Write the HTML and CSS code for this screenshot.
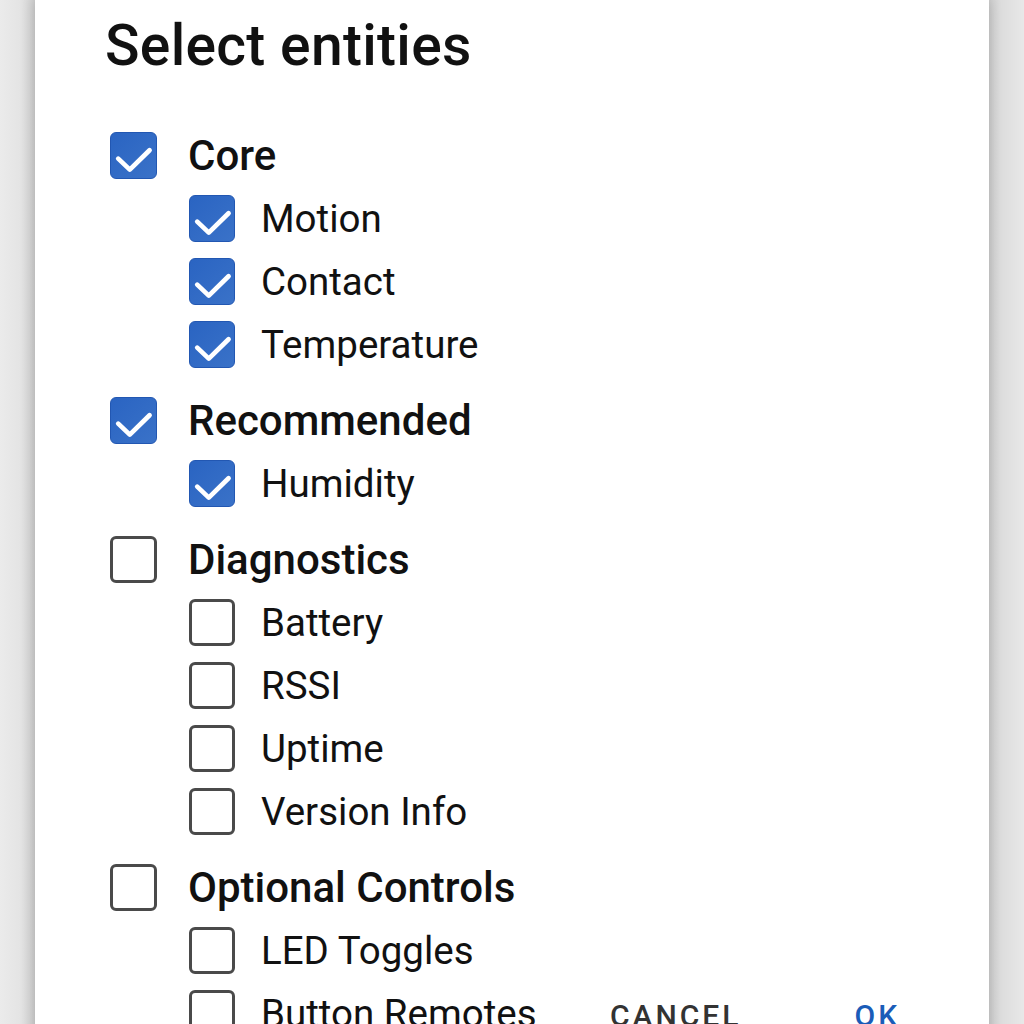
FILE: index.html
```html
<!DOCTYPE html>
<html>
<head>
<meta charset="utf-8">
<link rel="stylesheet" href="styles.css">
</head>
<body>
<div class="card">
  <h1 class="title">Select entities</h1>
  <div class="list">
    <div class="group">
      <div class="row top"><span class="cb on"><svg viewBox="0 0 24 24"><path d="M4.2 13.6 L10.1 19.2 L20.2 9.3"/></svg></span><span class="glabel">Core</span></div>
      <div class="row sub"><span class="cb on"><svg viewBox="0 0 24 24"><path d="M4.2 13.6 L10.1 19.2 L20.2 9.3"/></svg></span><span class="slabel">Motion</span></div>
      <div class="row sub"><span class="cb on"><svg viewBox="0 0 24 24"><path d="M4.2 13.6 L10.1 19.2 L20.2 9.3"/></svg></span><span class="slabel">Contact</span></div>
      <div class="row sub"><span class="cb on"><svg viewBox="0 0 24 24"><path d="M4.2 13.6 L10.1 19.2 L20.2 9.3"/></svg></span><span class="slabel">Temperature</span></div>
    </div>
    <div class="group">
      <div class="row top"><span class="cb on"><svg viewBox="0 0 24 24"><path d="M4.2 13.6 L10.1 19.2 L20.2 9.3"/></svg></span><span class="glabel">Recommended</span></div>
      <div class="row sub"><span class="cb on"><svg viewBox="0 0 24 24"><path d="M4.2 13.6 L10.1 19.2 L20.2 9.3"/></svg></span><span class="slabel">Humidity</span></div>
    </div>
    <div class="group">
      <div class="row top"><span class="cb"></span><span class="glabel">Diagnostics</span></div>
      <div class="row sub"><span class="cb"></span><span class="slabel">Battery</span></div>
      <div class="row sub"><span class="cb"></span><span class="slabel">RSSI</span></div>
      <div class="row sub"><span class="cb"></span><span class="slabel">Uptime</span></div>
      <div class="row sub"><span class="cb"></span><span class="slabel">Version Info</span></div>
    </div>
    <div class="group">
      <div class="row top"><span class="cb"></span><span class="glabel">Optional Controls</span></div>
      <div class="row sub"><span class="cb"></span><span class="slabel">LED Toggles</span></div>
      <div class="row sub"><span class="cb"></span><span class="slabel">Button Remotes</span></div>
    </div>
  </div>
  <div class="actions">
    <span class="btn cancel">CANCEL</span>
    <span class="btn ok">OK</span>
  </div>
</div>
</body>
</html>
```
FILE: styles.css
```css
html, body {
  margin: 0;
  padding: 0;
  height: 1024px;
  overflow: hidden;
}
body {
  background: linear-gradient(to right, #ebebeb 0px, #e4e4e4 20px, #cfcfcf 35px, #cfcfcf 989px, #dcdcdc 1000px, #e8e8e8 1024px);
  font-family: Roboto, "Noto Sans", sans-serif;
  color: #111;
}
.card {
  position: relative;
  margin-left: 35px;
  width: 954px;
  height: 1100px;
  background: #fff;
  box-shadow: 0 0 12px rgba(0,0,0,0.18);
  box-sizing: border-box;
  padding: 14px 0 0 75px;
}
.title {
  margin: 0 0 0 -5px;
  font-size: 57px;
  font-weight: 500;
  line-height: 64px;
  letter-spacing: 0.3px;
  color: #111;
  height: 110px;
}
.list {
  display: flex;
  flex-direction: column;
  gap: 13px;
}
.group {
  display: flex;
  flex-direction: column;
}
.row {
  display: flex;
  align-items: center;
  height: 63px;
}
.row.sub {
  padding-left: 79px;
}
.cb {
  flex: none;
  width: 47px;
  height: 47px;
  box-sizing: border-box;
  border: 3.5px solid #4a4a4a;
  border-radius: 6px;
  background: #fff;
  display: flex;
  align-items: center;
  justify-content: center;
}
.row.sub .cb {
  width: 46px;
  height: 47px;
}
.cb.on {
  border: 1.5px solid #2257b2;
  background: linear-gradient(135deg, #2a64c2, #3a72c8);
}
.cb svg {
  width: 47px;
  height: 47px;
  flex: none;
}
.cb svg path {
  fill: none;
  stroke: #fff;
  stroke-width: 2.4;
  stroke-linecap: round;
  stroke-linejoin: round;
}
.glabel {
  margin-left: 31px;
  font-size: 42px;
  font-weight: 500;
  color: #111;
}
.slabel {
  margin-left: 26px;
  font-size: 38.5px;
  font-weight: 400;
  color: #111;
}
.actions {
  position: absolute;
  left: 575px;
  top: 996px;
  display: flex;
  gap: 113px;
}
.btn {
  font-size: 30px;
  font-weight: 500;
  letter-spacing: 3px;
  line-height: 40px;
}
.cancel { color: #333; }
.ok { color: #1a5cb8; }
```
